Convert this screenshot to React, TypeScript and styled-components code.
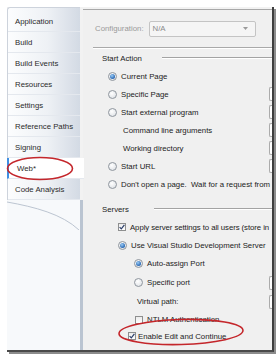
import React from 'react';
import styled, { createGlobalStyle } from 'styled-components';

const GlobalStyle = createGlobalStyle`
  html, body { margin: 0; padding: 0; background: #fff; }
  body {
    font-family: "Liberation Sans", Arial, sans-serif;
    font-size: 7.8px;
    color: #222;
  }
  * { box-sizing: border-box; }
`;

const Page = styled.div`
  position: relative;
  width: 276px;
  height: 355px;
  overflow: hidden;
  background: #fff;
  padding: 7px 0 0 7px;
`;

const Window = styled.div`
  display: flex;
  width: 267px;
  height: 345px;
  border-right: 2px solid #3e3e3e;
  border-bottom: 2px solid #4a4a4a;
  box-shadow: 2px 2px 0 #8c8c8c;
  background: #f2f2f2;
`;

const Sidebar = styled.div`
  flex: none;
  width: 76px;
  display: flex;
  flex-direction: column;
  position: relative;
  z-index: 1;
`;

const TabStrip = styled.div`
  width: 73px;
  padding-top: 3px;
  border-left: 1px solid #cdd3dc;
  border-top: 1px solid #cdd3dc;
  border-top-left-radius: 3px;
  background: linear-gradient(to right, #fcfdfe 0%, #eef1f5 55%, #d3dae4 100%);
`;

const Tab = styled.div<{ $active?: boolean }>`
  position: relative;
  height: 21px;
  display: flex;
  align-items: center;
  padding-left: 7px;
  color: #2b2b2b;
  border-bottom: 1px solid #e4e8ee;
  white-space: nowrap;
  ${p => p.$active && `
    background: #fff;
    margin-right: -4px;
    margin-left: -1px;
    padding-left: 8px;
    border-left: 2px solid #3f8fe3;
  `}
`;

const Filler = styled.div`
  flex: 1;
  background: #f7f9fb;
  border-right: 3px solid #bac4d1;
`;

const Content = styled.div`
  flex: 1;
  min-width: 0;
  margin-top: 2px;
  background: #f0f0f0;
  border-top: 1px solid #a8a8a8;
  overflow: hidden;
  display: flex;
  flex-direction: column;
`;

const ConfigBar = styled.div`
  height: 37px;
  display: flex;
  align-items: center;
  padding-left: 12px;
  gap: 5px;
  color: #9a9a9a;
`;

const Dropdown = styled.div`
  width: 107px;
  height: 16px;
  border: 1px solid #c4c4c4;
  border-radius: 2px;
  background: #f5f5f5;
  display: flex;
  align-items: center;
  justify-content: space-between;
  padding: 0 7px 0 3px;
  color: #8a8a8a;
`;

const Separator = styled.div`
  margin-left: 10px;
  border-top: 1px solid #a9a9a9;
  border-bottom: 1px solid #fff;
`;

const Body = styled.div`
  display: flex;
  flex-direction: column;
`;

const GroupHeader = styled.div<{ $top?: number; $gap: number }>`
  height: 18px;
  margin-top: ${p => p.$top ?? 0}px;
  padding-left: 19px;
  display: flex;
  align-items: center;
  gap: ${p => p.$gap}px;
  white-space: nowrap;
`;

const GroupLine = styled.span`
  flex: 1;
  border-top: 1px solid #a3a3a3;
  border-bottom: 1px solid #fff;
`;

const Row = styled.div<{ $h: number; $indent: number; $gap?: number; $tight?: boolean }>`
  display: flex;
  align-items: center;
  height: ${p => p.$h}px;
  padding-left: ${p => p.$indent}px;
  gap: ${p => p.$gap ?? 4}px;
  white-space: nowrap;
  letter-spacing: ${p => (p.$tight ? '-0.08px' : 'normal')};
`;

const Radio = styled.span<{ $on?: boolean }>`
  position: relative;
  flex: none;
  width: 9px;
  height: 9px;
  border-radius: 50%;
  border: 1px solid #8f969e;
  background: radial-gradient(circle at 40% 35%, #ffffff, #d9dde2);
  &::after {
    content: '';
    display: ${p => (p.$on ? 'block' : 'none')};
    position: absolute;
    left: 1px;
    top: 1px;
    width: 5px;
    height: 5px;
    border-radius: 50%;
    background: radial-gradient(circle at 40% 35%, #9ccdf6, #1f5fae 75%);
  }
`;

const Box = styled.span`
  flex: none;
  width: 8px;
  height: 8px;
  border: 1px solid #8e8f8f;
  background: linear-gradient(#ececec, #fff);
  display: flex;
  align-items: center;
  justify-content: center;
`;

const FieldStub = styled.span`
  margin-left: auto;
  flex: none;
  width: 3px;
  height: 14px;
  border: 1px solid #ababab;
  border-right: none;
  border-radius: 2px 0 0 2px;
  background: #fff;
`;

const Marks = styled.svg`
  position: absolute;
  left: 0;
  top: 0;
  pointer-events: none;
  z-index: 2;
`;

const CheckBox: React.FC<{ on?: boolean }> = ({ on }) => (
  <Box>
    {on && (
      <svg width="6" height="6" viewBox="0 0 6 6">
        <path d="M0.6 3.1 L2.3 4.9 L5.4 0.8" fill="none" stroke="#2c3f6a" strokeWidth="1.2" />
      </svg>
    )}
  </Box>
);

const tabs = [
  'Application',
  'Build',
  'Build Events',
  'Resources',
  'Settings',
  'Reference Paths',
  'Signing',
  'Web*',
  'Code Analysis',
];

const App: React.FC = () => (
  <Page>
    <GlobalStyle />
    <Window>
      <Sidebar>
        <TabStrip>
          {tabs.map(t => (
            <Tab key={t} $active={t === 'Web*'}>
              {t}
            </Tab>
          ))}
        </TabStrip>
        <Filler>
          <svg width="73" height="30" viewBox="0 0 73 30">
            <path d="M0 2 C 28 7, 55 14, 72 30" fill="none" stroke="#bcc5d1" strokeWidth="1" />
          </svg>
        </Filler>
      </Sidebar>

      <Content>
        <ConfigBar>
          <span>Configuration:</span>
          <Dropdown>
            <span>N/A</span>
            <svg width="5" height="3" viewBox="0 0 5 3">
              <path d="M0 0 H5 L2.5 3 Z" fill="#9a9a9a" />
            </svg>
          </Dropdown>
        </ConfigBar>
        <Separator />

        <Body>
          <GroupHeader $gap={20}>
            Start Action
            <GroupLine />
          </GroupHeader>
          <Row $h={18} $indent={25}>
            <Radio $on />
            Current Page
          </Row>
          <Row $h={18} $indent={25}>
            <Radio />
            Specific Page
            <FieldStub />
          </Row>
          <Row $h={18} $indent={25}>
            <Radio />
            Start external program
            <FieldStub />
          </Row>
          <Row $h={18} $indent={40}>
            Command line arguments
            <FieldStub />
          </Row>
          <Row $h={18} $indent={40}>
            Working directory
            <FieldStub />
          </Row>
          <Row $h={18} $indent={25}>
            <Radio />
            Start URL
            <FieldStub />
          </Row>
          <Row $h={18} $indent={25}>
            <Radio />
            Don't open a page.&nbsp; Wait for a request from
          </Row>

          <GroupHeader $top={7} $gap={25}>
            Servers
            <GroupLine />
          </GroupHeader>
          <Row $h={18} $indent={35} $gap={4} $tight>
            <CheckBox on />
            Apply server settings to all users (store in
          </Row>
          <Row $h={18} $indent={35}>
            <Radio $on />
            Use Visual Studio Development Server
          </Row>
          <Row $h={19} $indent={51}>
            <Radio $on />
            Auto-assign Port
          </Row>
          <Row $h={19} $indent={51}>
            <Radio />
            Specific port
            <FieldStub />
          </Row>
          <Row $h={19} $indent={54}>
            Virtual path:
            <FieldStub />
          </Row>
          <Row $h={17} $indent={52}>
            <CheckBox />
            NTLM Authentication
          </Row>
          <Row $h={16} $indent={45} $gap={2}>
            <CheckBox on />
            Enable Edit and Continue
          </Row>
        </Body>
      </Content>
    </Window>

    <Marks width="276" height="355" viewBox="0 0 276 355">
      <ellipse cx="40" cy="168.5" rx="32.5" ry="11" fill="none" stroke="#c4262b" strokeWidth="1.6" />
      <ellipse
        cx="181"
        cy="332"
        rx="62"
        ry="12.5"
        fill="none"
        stroke="#c4262b"
        strokeWidth="1.6"
        transform="rotate(-1.5 181 332)"
      />
    </Marks>
  </Page>
);

export default App;
